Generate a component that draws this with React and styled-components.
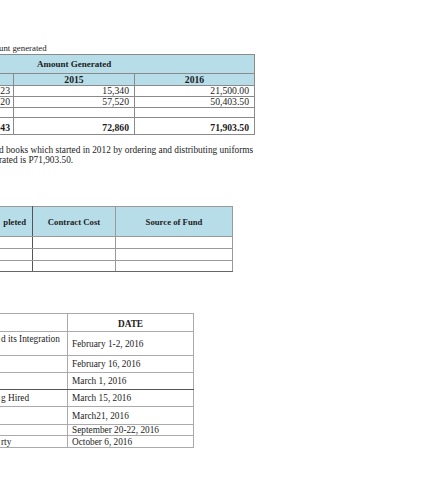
import styled, { createGlobalStyle } from "styled-components";

const GlobalStyle = createGlobalStyle`
  body {
    margin: 0;
    background: #fff;
    color: #1c1c1c;
    font-family: "Liberation Serif", "Times New Roman", serif;
  }
`;

const Page = styled.div`
  width: 426px;
  height: 480px;
  overflow: hidden;
  display: flex;
  flex-direction: column;
  align-items: flex-start;
`;

const Caption = styled.p`
  margin: 43px 0 0 -1px;
  font-size: 8.8px;
  line-height: 10px;
  white-space: nowrap;
`;

const Paragraph = styled.p`
  margin: 10px 0 0 -1px;
  font-size: 9.3px;
  line-height: 10px;
  white-space: nowrap;
`;

const Table = styled.table`
  border-collapse: collapse;
  table-layout: fixed;
  width: ${p => p.$width}px;
  margin: ${p => p.$margin};
  font-size: ${p => p.$size || 8.7}px;
  line-height: 10px;
`;

const Row = styled.tr`
  height: ${p => p.$h}px;
`;

const Cell = styled.td`
  border: 1px solid ${p => p.$line || "#8a8a8a"};
  border-right-color: ${p => p.$side || p.$line || "#8a8a8a"};
  border-bottom-color: ${p => p.$under || p.$line || "#8a8a8a"};
  padding: ${p => p.$pad || "0 5px"};
  text-align: ${p => p.$align || "left"};
  vertical-align: ${p => p.$valign || "middle"};
  font-weight: ${p => (p.$bold ? 700 : 400)};
  font-size: ${p => (p.$fs ? `${p.$fs}px` : "inherit")};
  background: ${p => (p.$head ? "#b7dde8" : "transparent")};
  white-space: nowrap;
  overflow: hidden;
`;

const amounts = [
  { id: "a", first: "23", y15: "15,340", y16: "21,500.00", h: 11 },
  { id: "b", first: "20", y15: "57,520", y16: "50,403.50", h: 11 },
  { id: "c", first: "", y15: "", y16: "", h: 10 },
];

const projectRows = [12, 12, 11];

const schedule = [
  { left: "d its Integration", date: "February 1-2, 2016", h: 24, top: true },
  { left: "", date: "February 16, 2016", h: 17 },
  { left: "", date: "March 1, 2016", h: 17, dark: true },
  { left: "g Hired", date: "March 15, 2016", h: 17 },
  { left: "", date: "March21, 2016", h: 18 },
  { left: "", date: "September 20-22, 2016", h: 10 },
  { left: "rty", date: "October 6, 2016", h: 12 },
];

const App = () => {
  return (
    <Page>
      <GlobalStyle />
      <Caption>unt generated</Caption>

      <Table $width={255} $size={9.7} $margin="1px 0 0 -1px">
        <colgroup>
          <col style={{ width: 14 }} />
          <col style={{ width: 121 }} />
          <col style={{ width: 120 }} />
        </colgroup>
        <tbody>
          <Row $h={19}>
            <Cell colSpan={3} $head $bold $fs={9} $pad="0 0 0 37px">
              Amount Generated
            </Cell>
          </Row>
          <Row $h={12}>
            <Cell $head />
            <Cell $head $bold $align="center">2015</Cell>
            <Cell $head $bold $align="center">2016</Cell>
          </Row>
          {amounts.map(el => (
            <Row key={el.id} $h={el.h}>
              <Cell $align="right" $pad="0 3px 0 0">{el.first}</Cell>
              <Cell $align="right">{el.y15}</Cell>
              <Cell $align="right">{el.y16}</Cell>
            </Row>
          ))}
          <Row $h={17}>
            <Cell $bold $align="right" $valign="bottom" $pad="0 3px 1px 0">43</Cell>
            <Cell $bold $align="right" $valign="bottom" $pad="0 5px 1px 0">72,860</Cell>
            <Cell $bold $align="right" $valign="bottom" $pad="0 5px 1px 0">71,903.50</Cell>
          </Row>
        </tbody>
      </Table>

      <Paragraph>
        d books which started in 2012 by ordering and distributing uniforms
        <br />
        rated is P71,903.50.
      </Paragraph>

      <Table $width={233} $margin="41px 0 0 -1px">
        <colgroup>
          <col style={{ width: 33 }} />
          <col style={{ width: 83 }} />
          <col style={{ width: 117 }} />
        </colgroup>
        <tbody>
          <Row $h={30}>
            <Cell $head $bold $align="right" $pad="0 6px 0 0" $line="#999" $side="#555">
              pleted
            </Cell>
            <Cell $head $bold $align="center" $line="#999">Contract Cost</Cell>
            <Cell $head $bold $align="center" $line="#999">Source of Fund</Cell>
          </Row>
          {projectRows.map((h, idx) => (
            <Row key={idx} $h={h}>
              <Cell $line="#999" $side="#555" $under={idx === 2 ? "#666" : undefined} />
              <Cell $line="#999" $under={idx === 2 ? "#666" : undefined} />
              <Cell $line="#999" $under={idx === 2 ? "#666" : undefined} />
            </Row>
          ))}
        </tbody>
      </Table>

      <Table $width={194} $size={9.3} $margin="41px 0 0 -1px">
        <colgroup>
          <col style={{ width: 68 }} />
          <col style={{ width: 126 }} />
        </colgroup>
        <tbody>
          <Row $h={18}>
            <Cell $line="#aaa" />
            <Cell $line="#aaa" $bold $align="center" $valign="bottom" $pad="0 0 2px 0">
              DATE
            </Cell>
          </Row>
          {schedule.map(el => (
            <Row key={el.date} $h={el.h}>
              <Cell
                $line="#aaa"
                $under={el.dark ? "#555" : undefined}
                $valign={el.top ? "top" : "middle"}
                $pad={el.top ? "2px 0 0 1px" : "0 0 0 1px"}
              >
                {el.left}
              </Cell>
              <Cell $line="#aaa" $under={el.dark ? "#555" : undefined} $pad="0 0 0 4px">
                {el.date}
              </Cell>
            </Row>
          ))}
        </tbody>
      </Table>
    </Page>
  );
};

export default App;
